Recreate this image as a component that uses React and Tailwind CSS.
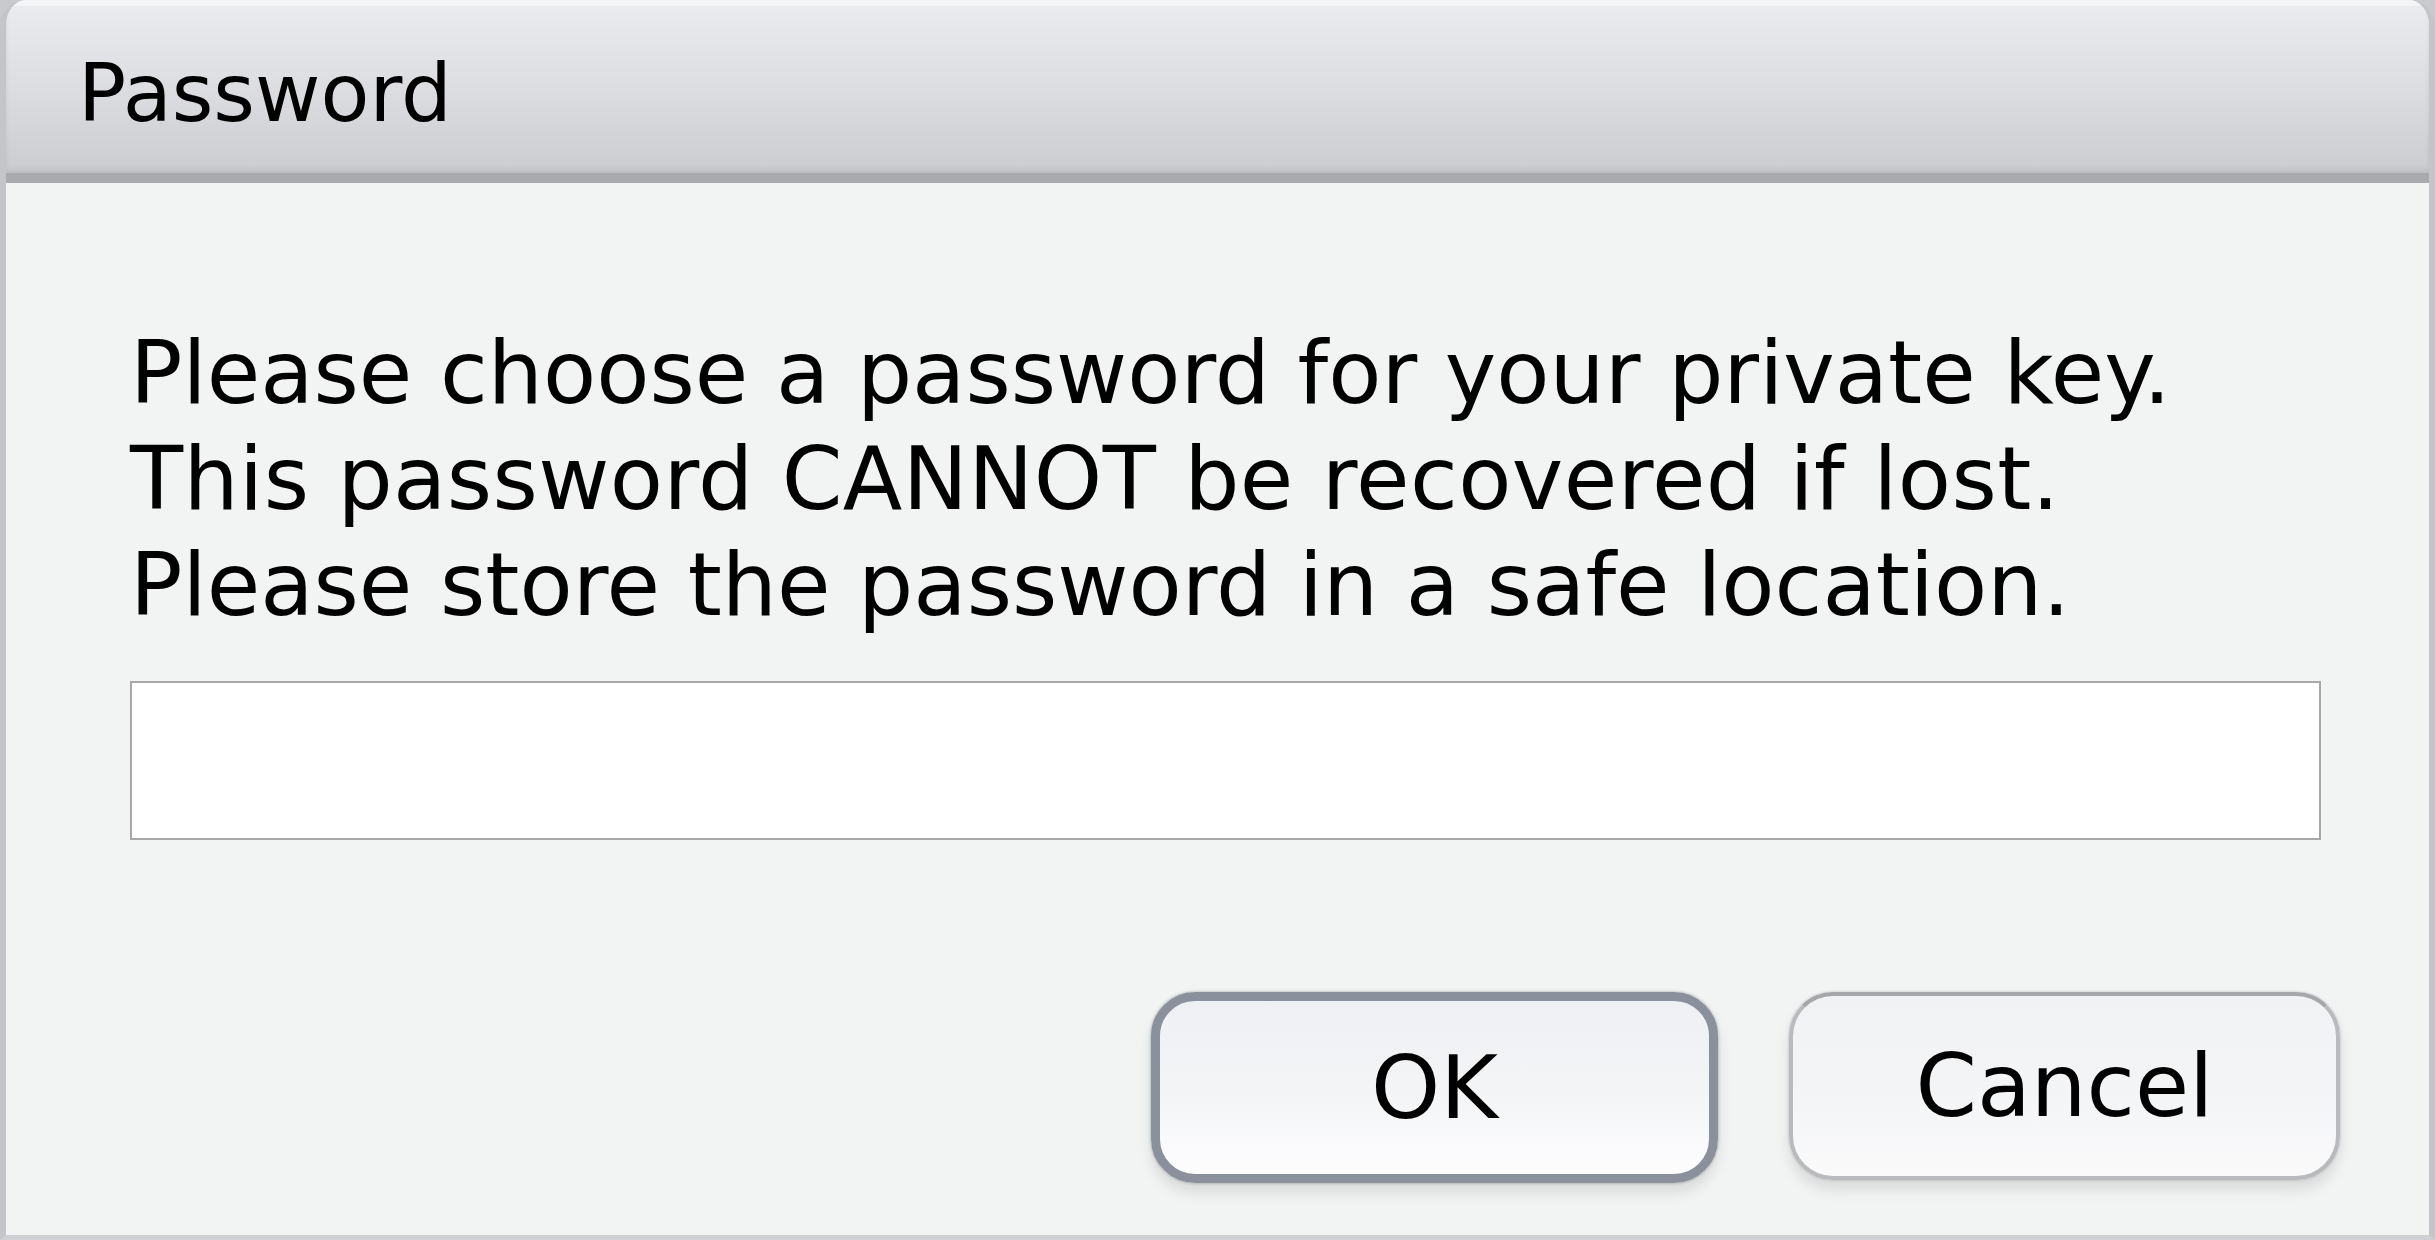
import React from "react";

export default function App() {
  const font = { fontFamily: '"DejaVu Sans", "Liberation Sans", sans-serif' };
  return (
    <div className="w-[2435px] h-[1240px] bg-[#c9cacd] overflow-hidden" style={font}>
      <div className="w-full h-full flex flex-col rounded-t-[26px] overflow-hidden bg-[#f2f4f3] border-l-[6px] border-r-[6px] border-b-[5px] border-l-[#c4c5c9] border-r-[#c4c5c9] border-b-[#cfd0d3]">
        {/* Title bar */}
        <div className="h-[183px] shrink-0 bg-gradient-to-b from-[#eaebee] via-[#dcdde0] to-[#cbccd0] border-t-[6px] border-t-[#f4f5f7] border-b-[10px] border-b-[#a9aaae] shadow-[inset_0_-3px_4px_rgba(0,0,0,0.08)] pl-[72px] pt-[48px]">
          <div className="text-[80px] leading-none text-black">Password</div>
        </div>

        {/* Body */}
        <div className="flex-1 flex flex-col pl-[124px] pr-[89px]">
          <div className="mt-[137px] text-[87px] leading-[106px] text-black">
            <div>Please choose a password for your private key.</div>
            <div className="tracking-[0.4px]">This password CANNOT be recovered if lost.</div>
            <div>Please store the password in a safe location.</div>
          </div>

          <div className="mt-[43px] mr-[19px] h-[159px] bg-white border-2 border-[#a8a8a8]" />

          <div className="mt-[152px] flex justify-end gap-[71px]">
            <button className="w-[567px] h-[191px] rounded-[44px] border-[9px] border-[#8a919c] bg-gradient-to-b from-[#eef0f3] via-[#f3f4f6] to-[#fdfdfe] shadow-[0_10px_14px_rgba(0,0,0,0.10),0_0_3px_rgba(80,90,100,0.5)] text-[88px] leading-none text-black flex items-center justify-center">
              OK
            </button>
            <button className="w-[551px] h-[188px] rounded-[44px] border-[4px] border-[#b9babd] border-t-[#a6a7ab] bg-gradient-to-b from-[#f1f2f4] via-[#f3f4f6] to-[#fafafb] shadow-[0_10px_14px_rgba(0,0,0,0.10),0_0_3px_rgba(0,0,0,0.2)] text-[88px] leading-none text-black flex items-center justify-center">
              Cancel
            </button>
          </div>
        </div>
      </div>
    </div>
  );
}
